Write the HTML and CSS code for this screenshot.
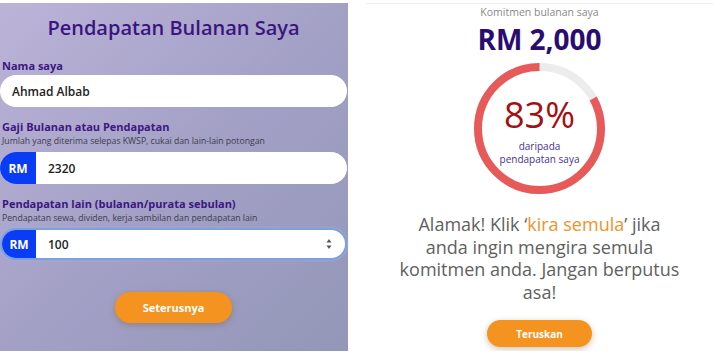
FILE: index.html
```html
<!DOCTYPE html>
<html>
<head>
  <title>Pendapatan Bulanan Saya</title>
  <meta charset="utf-8">
  <link rel="stylesheet" href="styles.css">
</head>
<body>
  <div class="container">

    <div class="income">
      <h1>Pendapatan Bulanan Saya</h1>

      <div class="field">
        <label>Nama saya</label>
        <div class="input-box">
          <input class="text" type="text" value="Ahmad Albab">
        </div>
      </div>

      <div class="field">
        <label>Gaji Bulanan atau Pendapatan</label>
        <p class="hint">Jumlah yang diterima selepas KWSP, cukai dan lain-lain potongan</p>
        <div class="input-box">
          <span class="prefix">RM</span>
          <input class="text" type="text" value="2320">
        </div>
      </div>

      <div class="field">
        <label>Pendapatan lain (bulanan/purata sebulan)</label>
        <p class="hint">Pendapatan sewa, dividen, kerja sambilan dan pendapatan lain</p>
        <div class="input-box focused">
          <span class="prefix">RM</span>
          <input class="text" type="text" value="100">
          <svg class="spin" width="6" height="12" viewBox="0 0 6 12">
            <path d="M3 1 L5.5 4.5 H0.5 Z" fill="#555"/>
            <path d="M3 11 L5.5 7.5 H0.5 Z" fill="#555"/>
          </svg>
        </div>
      </div>

      <div class="actions">
        <button class="orange big" type="button">Seterusnya</button>
      </div>
    </div>

    <div class="result">
      <p class="caption">Komitmen bulanan saya</p>
      <h2>RM 2,000</h2>

      <div class="ring">
        <svg width="131" height="131" viewBox="-65.5 -65.5 131 131">
          <circle r="61.5" fill="none" stroke="#ececec" stroke-width="8"/>
          <circle r="61.5" fill="none" stroke="#e85a5a" stroke-width="8"
                  stroke-dasharray="320.7 400" transform="rotate(-90) scale(1,-1)"/>
        </svg>
        <div class="ring-text">
          <div class="percent">83%</div>
          <div class="of">daripada<br>pendapatan saya</div>
        </div>
      </div>

      <p class="message">Alamak! Klik &lsquo;<span class="hl">kira semula</span>&rsquo; jika anda ingin mengira semula komitmen anda. Jangan berputus asa!</p>

      <button class="orange small" type="button">Teruskan</button>
    </div>

  </div>
</body>
</html>
```

FILE: styles.css
```css
body {
  margin: 0;
  font-family: 'Open Sans', 'Noto Sans', sans-serif;
  background: #fff;
}
.container {
  display: flex;
  flex-direction: row;
  gap: 18px;
  padding-top: 3px;
}
.income {
  width: 348px;
  height: 348px;
  box-sizing: border-box;
  background: linear-gradient(135deg, #bcb3d8 0%, #a3a0c6 50%, #9397b8 100%);
  padding: 0 1px 0 0;
}
h1 {
  margin: 0;
  padding-top: 11px;
  height: 41px;
  text-align: center;
  font-size: 20px;
  font-weight: 600;
  color: #3a1580;
}
.field {
  margin-top: 3px;
}
.field + .field {
  margin-top: 12px;
}
label {
  display: block;
  padding-left: 2px;
  font-size: 11px;
  font-weight: 700;
  line-height: 16px;
  color: #3b1782;
}
.hint {
  margin: 0;
  padding-left: 2px;
  font-size: 8.7px;
  line-height: 12px;
  color: #3c3c4a;
}
.input-box {
  display: flex;
  align-items: center;
  height: 32px;
  margin-top: 1px;
  background: #fff;
  border-radius: 16px;
  overflow: hidden;
  box-sizing: border-box;
}
.hint + .input-box {
  margin-top: 5px;
}
.input-box.focused {
  margin-top: 4px;
  border: 2px solid #7f9ee0;
  box-shadow: 0 0 3px #9db3ea;
}
.prefix {
  width: 36px;
  height: 100%;
  display: flex;
  align-items: center;
  justify-content: center;
  background: #0a3cf5;
  color: #fff;
  font-size: 12px;
  font-weight: 700;
}
.focused .prefix {
  width: 34px;
}
.text {
  flex: 1;
  border: none;
  outline: none;
  background: transparent;
  padding: 0 12px;
  font-family: inherit;
  font-size: 12px;
  font-weight: 600;
  color: #222;
}
.spin {
  margin-right: 13px;
}
.actions {
  display: flex;
  justify-content: center;
  margin-top: 32px;
}
button.orange {
  border: none;
  background: #f4931f;
  color: #fff;
  font-family: inherit;
  font-weight: 700;
  box-shadow: 0 2px 6px rgba(120, 80, 30, 0.35);
}
.big {
  width: 117px;
  height: 31px;
  border-radius: 16px;
  font-size: 11px;
}
.small {
  width: 105px;
  height: 27px;
  border-radius: 14px;
  font-size: 10px;
  margin-top: 17px;
}
.result {
  width: 347px;
  display: flex;
  flex-direction: column;
  align-items: center;
  border-top: 1px solid #f0f0f0;
}
.caption {
  margin: 1px 0 0;
  font-size: 10.5px;
  line-height: 15px;
  color: #8a8a8a;
}
h2 {
  margin: 0;
  font-size: 28px;
  line-height: 38px;
  font-weight: 700;
  color: #2a0c70;
}
.ring {
  position: relative;
  width: 131px;
  height: 131px;
  margin-top: 5px;
}
.ring svg {
  display: block;
}
.ring-text {
  position: absolute;
  top: 0;
  left: 0;
  right: 0;
  bottom: 0;
  padding-top: 6px;
  display: flex;
  flex-direction: column;
  align-items: center;
  justify-content: center;
  text-align: center;
}
.percent {
  font-size: 36px;
  line-height: 34px;
  color: #a30f12;
}
.of {
  font-size: 10px;
  line-height: 13px;
  color: #4a2f92;
  margin-top: 8px;
}
.message {
  margin: 19px 0 0;
  width: 285px;
  text-align: center;
  font-size: 18px;
  line-height: 22.5px;
  color: #616161;
}
.hl {
  color: #f0922a;
}
```
